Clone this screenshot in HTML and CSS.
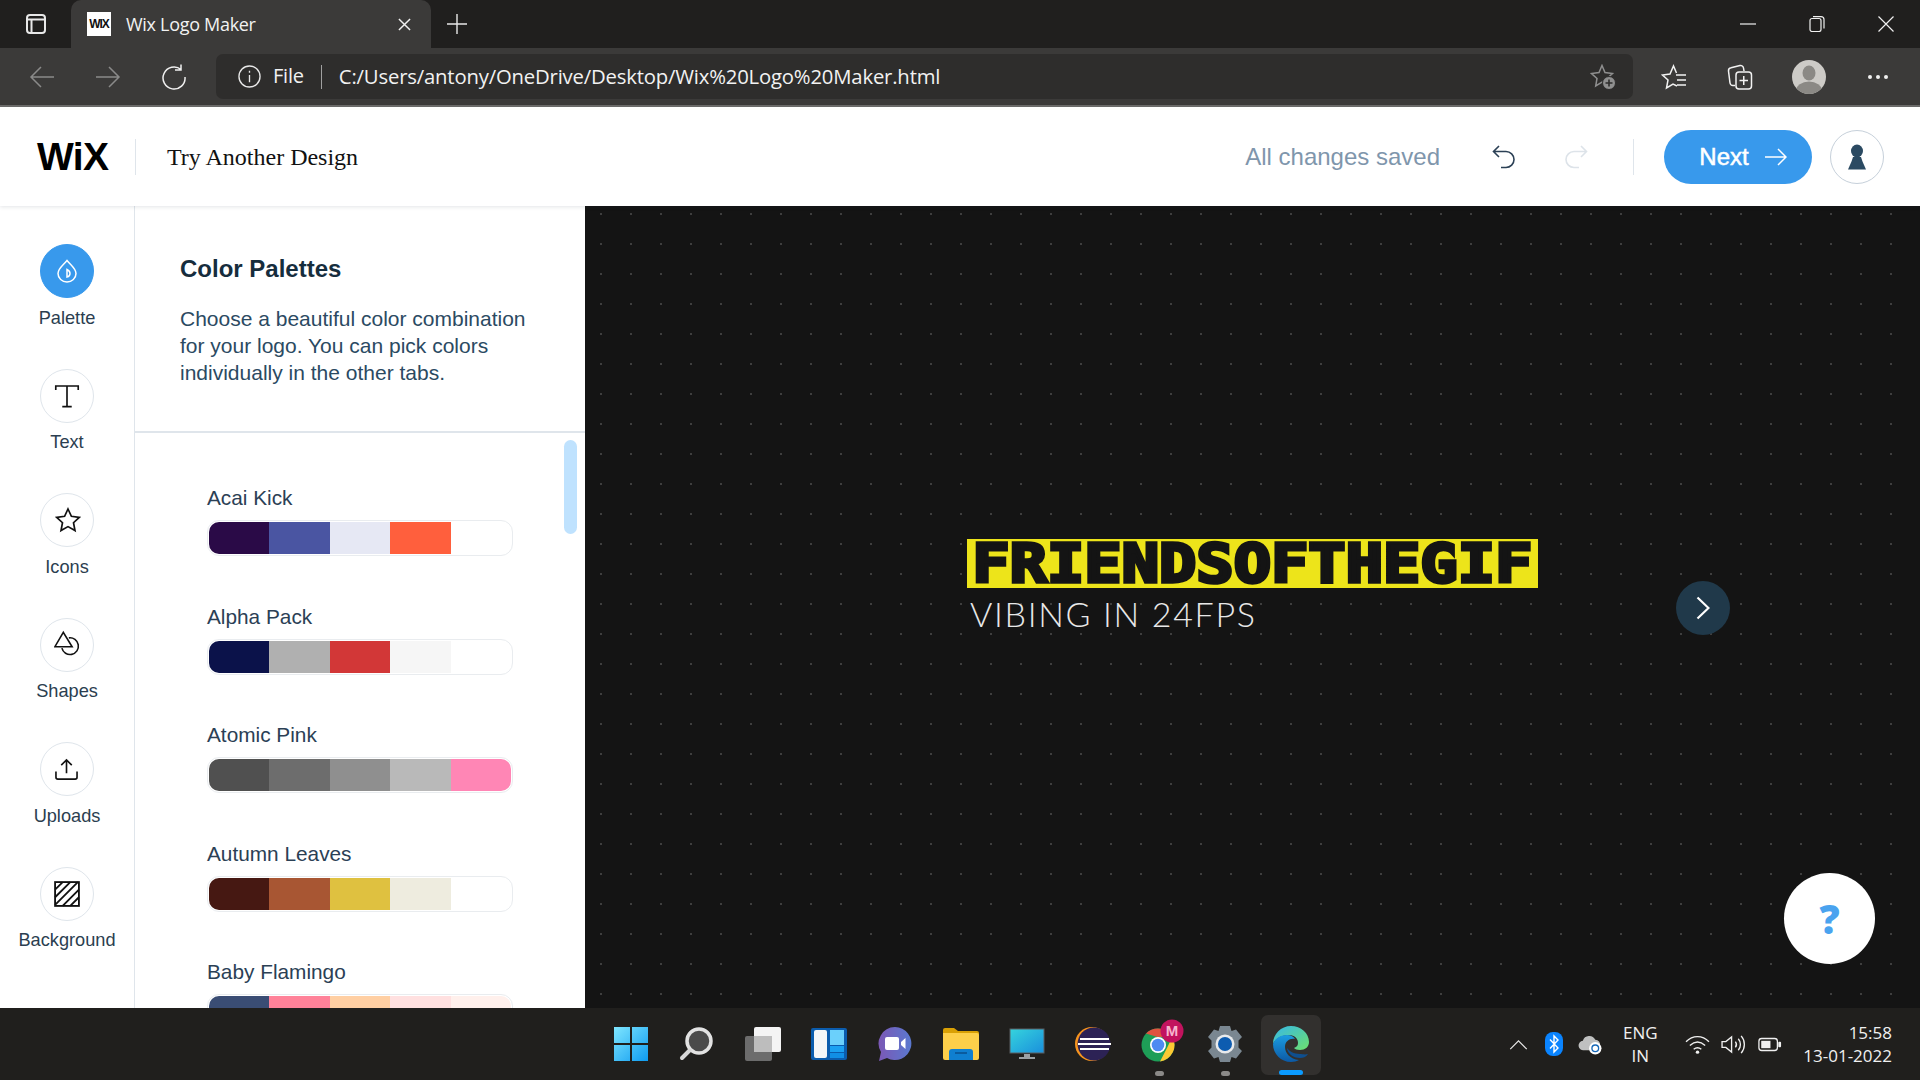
FILE: index.html
```html
<!DOCTYPE html>
<html lang="en">
<head>
<meta charset="utf-8">
<title>Wix Logo Maker</title>
<link rel="stylesheet" href="styles.css">
</head>
<body>
<div class="screen">
  <div class="tabstrip">
    <svg class="tabs-btn" viewBox="0 0 20 20"><rect x="1" y="1" width="18" height="18" rx="3"/><path d="M1 5.500h18M5.500 5.500V19"/></svg>
    <div class="tab">
      <span class="favicon">WIX</span>
      <span class="tab-title">Wix Logo Maker</span>
      <svg class="tab-close" viewBox="0 0 14 14"><path d="M1 1l12 12M13 1L1 13"/></svg>
    </div>
    <svg class="tab-plus" viewBox="0 0 20 20"><path d="M10 0v20M0 10h20"/></svg>
    <div class="win-controls">
      <svg viewBox="0 0 16 16"><path d="M0 8h16"/></svg>
      <svg viewBox="0 0 16 16"><rect x="1" y="2.500" width="11" height="13" rx="2"/><path d="M4 .6h8a3 3 0 0 1 3 3v9"/></svg>
      <svg viewBox="0 0 16 16"><path d="M.5.5l15 15M15.500.5l-15 15"/></svg>
    </div>
  </div>
  <div class="toolbar">
    <svg class="tb-ic dim" viewBox="0 0 26 24"><path d="M25 12H2M12 2L2 12l10 10"/></svg>
    <svg class="tb-ic dim" viewBox="0 0 26 24"><path d="M1 12h23M14 2l10 10-10 10"/></svg>
    <svg class="tb-ic" viewBox="0 0 26 26"><path d="M20 5.500A11 11 0 1 0 24 13M20 0.500v5.500h-6"/></svg>
    <div class="omnibox">
      <svg class="info" viewBox="0 0 24 24"><circle cx="12" cy="12" r="11"/><path d="M12 10.500v7.500M12 6v2"/></svg>
      <span class="file">File</span>
      <span class="omni-sep"></span>
      <span class="url">C:/Users/antony/OneDrive/Desktop/Wix%20Logo%20Maker.html</span>
      <svg class="favadd" viewBox="0 0 26 26"><path class="star-dim" d="M12 1.500l3 7 7.500 1-5.500 5 1.300 7.500-6.300-3.800-6.300 3.800 1.300-7.500-5.500-5 7.500-1z"/><circle class="plus-bg" cx="19" cy="19" r="6.500"/><path class="plus-fg" d="M19 15.500v7M15.500 19h7"/></svg>
    </div>
    <div class="tb-right">
      <svg class="tb-ic2" viewBox="0 0 26 26"><path d="M16 22l-4-2-6.500 4 1.500-8-5.500-5 7.500-1 3.500-8 3 7"/><path d="M15 11h10M16 16h9M16 21h9"/></svg>
      <svg class="tb-ic2" viewBox="0 0 26 26"><path d="M8 21.500H6a3 3 0 0 1-3-2.500L1.500 7A3 3 0 0 1 4 3.800L13 1.500a3 3 0 0 1 3.500 2.500l.5 3"/><rect x="9" y="8" width="15.500" height="17" rx="3"/><path d="M16.750 12v9M12.500 16.500h8.500"/></svg>
      <svg class="avatar" viewBox="0 0 34 34"><defs><clipPath id="avc"><circle cx="17" cy="17" r="17"/></clipPath></defs><g clip-path="url(#avc)"><rect width="34" height="34" fill="#cdcbc7"/><ellipse cx="17" cy="13" rx="6.500" ry="7.500" fill="#8b8985"/><ellipse cx="17" cy="31" rx="13" ry="9.500" fill="#8b8985"/></g></svg>
      <span class="more"><i></i><i></i><i></i></span>
    </div>
  </div>
  <header class="appbar">
    <div class="wix">WiX</div>
    <span class="vsep"></span>
    <span class="try">Try Another Design</span>
    <div class="appbar-right">
      <span class="saved">All changes saved</span>
      <svg class="undo" viewBox="0 0 24 24"><path d="M7 1L1.500 6.500 7 12M1.500 6.500H14a8 8 0 0 1 0 16h-5"/></svg>
      <svg class="redo" viewBox="0 0 24 24"><path d="M17 1l5.500 5.500L17 12M22.500 6.500H10a8 8 0 0 0 0 16h5"/></svg>
      <span class="vsep2"></span>
      <button class="next">Next <svg viewBox="0 0 22 18"><path d="M0 9h21M13 1l8 8-8 8"/></svg></button>
      <span class="user"><svg viewBox="0 0 20 26"><ellipse cx="10" cy="7" rx="6" ry="6.500"/><path d="M6 13h8l1.500 4.500L19 25.500H1l3.500-8z"/></svg></span>
    </div>
  </header>
  <main class="workspace">
    <nav class="sidenav">
      <div class="nav-item">
        <span class="disc active"><svg viewBox="0 0 22 24"><path d="M11 1.500c4 5 9 8 9 13a9 8.500 0 0 1-18 0c0-5 5-8 9-13z"/><path d="M11 10.500c2 1 3 2.500 3 4s-1 3-3 3.500z"/></svg></span>
        <span class="nav-label">Palette</span>
      </div>
      <div class="nav-item">
        <span class="disc"><svg class="ic-text" viewBox="0 0 22 22"><path d="M1.500 6V2.500h19V6M11 2.500V20M7 20h8"/></svg></span>
        <span class="nav-label">Text</span>
      </div>
      <div class="nav-item">
        <span class="disc"><svg class="ic-star" viewBox="0 0 26 26"><path d="M13 2l3.400 7.300 7.900 1-5.800 5.400 1.500 7.800-7-3.900-7 3.900 1.500-7.800-5.800-5.400 7.900-1z"/></svg></span>
        <span class="nav-label">Icons</span>
      </div>
      <div class="nav-item">
        <span class="disc"><svg class="ic-shape" viewBox="0 0 28 26"><path d="M10 1.500L1 17h18.500z"/><path d="M16 7.500a9 9 0 1 1-7.500 11"/></svg></span>
        <span class="nav-label">Shapes</span>
      </div>
      <div class="nav-item">
        <span class="disc"><svg class="ic-up" viewBox="0 0 24 24"><path d="M12 16V2M6.500 7.500L12 2l5.500 5.500M1 14v6a2 2 0 0 0 2 2h18a2 2 0 0 0 2-2v-6"/></svg></span>
        <span class="nav-label">Uploads</span>
      </div>
      <div class="nav-item">
        <span class="disc"><svg viewBox="0 0 24 24"><rect x="1" y="1" width="22" height="22"/><path d="M1 8L8 1M1 15L15 1M1 22L22 1M8 23L23 8M15 23l8-8"/></svg></span>
        <span class="nav-label">Background</span>
      </div>
    </nav>
    <section class="panel">
      <div class="panel-head">
        <h2>Color Palettes</h2>
        <p>Choose a beautiful color combination for your logo. You can pick colors individually in the other tabs.</p>
      </div>
      <div class="palettes">
        <div class="thumb"></div>
        <div class="palette">
          <div class="pal-name">Acai Kick</div>
          <div class="bar"><i class="c-a1"></i><i class="c-a2"></i><i class="c-a3"></i><i class="c-a4"></i><i class="c-w"></i></div>
        </div>
        <div class="palette">
          <div class="pal-name">Alpha Pack</div>
          <div class="bar"><i class="c-b1"></i><i class="c-b2"></i><i class="c-b3"></i><i class="c-b4"></i><i class="c-w"></i></div>
        </div>
        <div class="palette">
          <div class="pal-name">Atomic Pink</div>
          <div class="bar"><i class="c-c1"></i><i class="c-c2"></i><i class="c-c3"></i><i class="c-c4"></i><i class="c-c5"></i></div>
        </div>
        <div class="palette">
          <div class="pal-name">Autumn Leaves</div>
          <div class="bar"><i class="c-d1"></i><i class="c-d2"></i><i class="c-d3"></i><i class="c-d4"></i><i class="c-w"></i></div>
        </div>
        <div class="palette">
          <div class="pal-name">Baby Flamingo</div>
          <div class="bar"><i class="c-e1"></i><i class="c-e2"></i><i class="c-e3"></i><i class="c-e4"></i><i class="c-e5"></i></div>
        </div>
      </div>
    </section>
    <section class="canvas">
      <div class="logo">
        <div class="logo-name"><span>FRIENDSOFTHEGIF</span></div>
        <div class="logo-tag">VIBING IN 24FPS</div>
      </div>
      <span class="chev"><svg viewBox="0 0 14 24"><path d="M1.500 1.500L12.500 12 1.500 22.500"/></svg></span>
      <span class="help">?</span>
    </section>
  </main>
  <footer class="taskbar">
    <div></div>
    <div class="apps">
      <span class="app"><svg viewBox="0 0 36 36"><defs><linearGradient id="w1" x1="0" y1="0" x2="1" y2="1"><stop offset="0" stop-color="#7fe6ff"/><stop offset="1" stop-color="#0e9bf0"/></linearGradient></defs><path fill="url(#w1)" d="M1 1h16v16H1zM19 1h16v16H19zM1 19h16v16H1zM19 19h16v16H19z"/></svg></span>
      <span class="app"><svg viewBox="0 0 36 36"><circle cx="20" cy="15" r="12" fill="#4a4a4a" stroke="#e2e2e2" stroke-width="3.500"/><path d="M10.500 24.500L3 32" stroke="#d8d8d8" stroke-width="4" stroke-linecap="round"/></svg></span>
      <span class="app"><svg viewBox="0 0 36 36"><rect x="0" y="10" width="27" height="25" rx="2" fill="#6c6c6c"/><rect x="9" y="1" width="27" height="25" rx="2" fill="#f4f4f4"/><rect x="9" y="10" width="18" height="16" fill="#bdbdbd"/></svg></span>
      <span class="app"><svg viewBox="0 0 36 36"><rect x="0" y="2" width="36" height="32" rx="2" fill="#0b5cad"/><rect x="3" y="4" width="13" height="28" rx="2" fill="#f4f6f8"/><rect x="19" y="4" width="14" height="15" fill="#6bd0fb"/><rect x="19" y="20" width="14" height="6" fill="#1ba1f2"/><rect x="19" y="27" width="14" height="5" fill="#118fe6"/></svg></span>
      <span class="app"><svg viewBox="0 0 36 36"><defs><linearGradient id="ch" x1="0" y1="0" x2="1" y2="0"><stop offset="0" stop-color="#7b58b5"/><stop offset="1" stop-color="#5a79d0"/></linearGradient></defs><path fill="url(#ch)" d="M18 1a16.500 16.500 0 1 1-8 31l-8 3 2-9A16.500 16.500 0 0 1 18 1z"/><rect x="8" y="11" width="14" height="13" rx="2" fill="#fff"/><path fill="#fff" d="M24 16l4.500-4v11L24 19z"/></svg></span>
      <span class="app"><svg viewBox="0 0 36 36"><path fill="#d9a005" d="M0 4a2 2 0 0 1 2-2h9l4 3h19a2 2 0 0 1 2 2v4H0z"/><path fill="#fdcf4a" d="M0 7h34a2 2 0 0 1 2 2v23a2 2 0 0 1-2 2H2a2 2 0 0 1-2-2z"/><path fill="#0f7fd0" d="M6 34V26a3 3 0 0 1 3-3h18a3 3 0 0 1 3 3v8z"/><rect x="12" y="26" width="12" height="2" fill="#0a5b9e"/></svg></span>
      <span class="app"><svg viewBox="0 0 36 36"><defs><linearGradient id="mon" x1="0" y1="0" x2="1" y2="1"><stop offset="0" stop-color="#35d4dd"/><stop offset="1" stop-color="#1a8fdc"/></linearGradient></defs><rect x="1" y="3" width="34" height="24" fill="url(#mon)" stroke="#5a5f63" stroke-width="1"/><path fill="#9aa0a4" d="M15 28h6v3h5v2H10v-2h5z"/></svg></span>
      <span class="app"><svg viewBox="0 0 36 36"><circle cx="17" cy="18" r="17" fill="#f7941e"/><circle cx="19" cy="18" r="16.500" fill="#2c2255"/><path d="M5 13h29M3 18h33M5 23h29" stroke="#fff" stroke-width="2.200"/></svg></span>
      <span class="app app-ran"><svg class="ic-chrome" viewBox="0 0 44 44"><circle cx="18" cy="26" r="16.500" fill="#1e9e57"/><path fill="#e0533f" d="M18 9.500a16.500 16.500 0 0 1 14.300 8.200L18 18h-.5L6 14.500A16.500 16.500 0 0 1 18 9.500z"/><path fill="#fdc933" d="M32.300 17.700A16.500 16.500 0 0 1 20 42.400L27 29z"/><circle cx="18" cy="26" r="8" fill="#fff"/><circle cx="18" cy="26" r="6.300" fill="#4e8bf2"/><circle cx="32" cy="12" r="11.500" fill="#c2135e"/><text x="32" y="17" class="badge-m">M</text></svg></span>
      <span class="app app-ran"><svg viewBox="0 0 36 36"><path fill="#7a8791" d="M13 0h10l1.500 5 4.500-1.500L35 11l-3.500 3.500v7L35 25l-6 7.500-4.500-1.500L23 36H13l-1.500-5L7 32.500 1 25l3.500-3.500v-7L1 11l6-7.500L11.500 5z"/><circle cx="18" cy="18" r="9.500" fill="#e8eaec"/><circle cx="18" cy="18" r="7" fill="#0d5cb0"/></svg></span>
      <span class="app app-active"><svg viewBox="0 0 36 36"><defs><linearGradient id="e1" x1="0" y1="0" x2="1" y2="1"><stop offset="0" stop-color="#36b8e8"/><stop offset="1" stop-color="#6ee06c"/></linearGradient><linearGradient id="e2" x1="0" y1="0" x2="0" y2="1"><stop offset="0" stop-color="#1b9de2"/><stop offset="1" stop-color="#0c59a4"/></linearGradient></defs><path fill="url(#e1)" d="M18 0c10 0 18 7 18 16 0 5-4 8-9 8-3 0-5-1-6-2 3-1 4-3 4-5 0-4-3-8-9-8C8 9 2 13 0 18 0 8 8 0 18 0z"/><path fill="url(#e2)" d="M0 18C2 12 8 9 14 9c4 0 7 2 8 4-5-1-10 2-10 8 0 6 5 12 14 13-2 1-5 2-8 2C8 36 0 28 0 18z"/><path fill="#0f4f8f" d="M14 22c0 5 6 10 13 10 3 0 6-1 8-4-3 1-6 0-8 0-6 0-11-3-13-6z"/></svg></span>
    </div>
    <div class="tray">
      <svg class="t-chev" viewBox="0 0 20 12"><path d="M1 11l9-9 9 9"/></svg>
      <svg class="t-bt" viewBox="0 0 18 24"><rect width="18" height="24" rx="8" fill="#0a84ff"/><path d="M5 7.500l8 8.500-4 4V4l4 4-8 8.500" fill="none" stroke="#fff" stroke-width="1.400"/></svg>
      <svg class="t-cloud" viewBox="0 0 26 22"><path fill="#bfc0c0" d="M6 17a5 5 0 0 1-1-10 7 7 0 0 1 13-1 5 5 0 0 1 5 6l-6 5z"/><circle cx="18" cy="15" r="6.500" fill="#fff"/><circle cx="18" cy="15" r="3.500" fill="none" stroke="#1668b8" stroke-width="1.400"/></svg>
      <div class="lang"><span>ENG</span><span>IN</span></div>
      <svg class="t-wifi" viewBox="0 0 26 22"><path d="M1 8c7-7 17-7 24 0M5 12c5-4.500 11-4.500 16 0M9 16c2.500-2 5.500-2 8 0"/><circle class="t-fill" cx="13" cy="19" r="1.800"/></svg>
      <svg class="t-vol" viewBox="0 0 26 22"><path d="M1 8v6h4l6 5V3L5 8zM15 8c1.500 2 1.500 4 0 6M18 5c3 3.500 3 8.500 0 12M21 2c4.500 5 4.500 13 0 18"/></svg>
      <svg class="t-bat" viewBox="0 0 26 16"><rect x="1" y="1.500" width="20" height="13" rx="3"/><rect class="t-fill" x="3.500" y="4" width="10" height="8"/><rect class="t-fill" x="22" y="5" width="3" height="6" rx="1"/></svg>
      <div class="clock"><span>15:58</span><span>13-01-2022</span></div>
    </div>
  </footer>
</div>
</body>
</html>
```
FILE: styles.css
```css
* { box-sizing: border-box; }
html, body { margin: 0; padding: 0; }
body { width: 1920px; height: 1080px; overflow: hidden; font-family: "Liberation Sans", Arial, sans-serif; background: #141414; }
svg { display: block; fill: none; }
.screen { width: 1920px; height: 1080px; display: flex; flex-direction: column; }

/* tab strip */
.tabstrip { height: 48px; background: #201f1e; display: flex; align-items: center; flex: none; }
.tabs-btn { width: 20px; height: 20px; margin-left: 26px; stroke: #e8e8e8; stroke-width: 2; }
.tab { width: 360px; height: 48px; margin-left: 25px; background: #3b3a39; border-radius: 10px 10px 0 0; display: flex; align-items: center; padding-left: 16px; }
.favicon { width: 24px; height: 24px; background: #fff; color: #111; font: 700 12px/24px "Liberation Sans", sans-serif; letter-spacing: -1px; text-align: center; flex: none; }
.tab-title { margin-left: 15px; color: #f2f2f2; font: 18px "Open Sans", sans-serif; letter-spacing: -0.300px; flex: 1; }
.tab-close { width: 13px; height: 13px; margin-right: 20px; stroke: #f0f0f0; stroke-width: 1.600; }
.tab-plus { width: 20px; height: 20px; margin-left: 16px; stroke: #e8e8e8; stroke-width: 1.400; }
.win-controls { margin-left: auto; display: flex; align-items: center; gap: 53px; padding-right: 26px; }
.win-controls svg { width: 16px; height: 16px; stroke: #f0f0f0; stroke-width: 1.200; }

/* toolbar */
.toolbar { height: 59px; background: #3b3a39; border-bottom: 2px solid #6d6c6b; display: flex; align-items: center; flex: none; padding-left: 29px; }
.tb-ic { width: 26px; height: 26px; margin-right: 40px; stroke: #f0f0f0; stroke-width: 1.500; flex: none; }
.tb-ic.dim { stroke: #8a8a89; }
.omnibox { width: 1417px; height: 45px; margin-left: -11px; background: #2e2d2c; border-radius: 7px; display: flex; align-items: center; padding-left: 22px; color: #f2f2f2; font: 20px/26px "Open Sans", sans-serif; }
.info { width: 23px; height: 23px; stroke: #e8e8e8; stroke-width: 1.400; }
.file { margin: -2px 0 0 12px; letter-spacing: -0.200px; }
.omni-sep { width: 1px; height: 24px; background: #a0a0a0; margin: 0 17px 0 17px; }
.url { flex: 1; margin-top: -2px; font-size: 20.300px; letter-spacing: -0.180px; white-space: nowrap; }
.favadd { width: 26px; height: 26px; margin-right: 17px; }
.star-dim { stroke: #8f8f8f; stroke-width: 1.500; }
.plus-bg { fill: #8f8f8f; stroke: #2e2d2c; stroke-width: 1; }
.plus-fg { stroke: #2e2d2c; stroke-width: 1.600; }
.tb-right { display: flex; align-items: center; margin-left: 28px; }
.tb-ic2 { width: 26px; height: 26px; margin-right: 40px; stroke: #f2f2f2; stroke-width: 1.500; }
.avatar { width: 34px; height: 34px; margin: 0 42px 0 -1px; }
.more { display: flex; gap: 4px; }
.more i { width: 4px; height: 4px; border-radius: 50%; background: #f0f0f0; }

/* app header */
.appbar { height: 99px; background: #fff; display: flex; align-items: center; flex: none; padding-left: 37px; position: relative; z-index: 2; box-shadow: 0 1px 4px rgba(22,45,61,.12); }
.wix { width: 72px; font: 700 39px/1 "Liberation Sans", sans-serif; color: #000; letter-spacing: -0.700px; white-space: nowrap; }
.vsep { width: 1px; height: 36px; background: #dfe5eb; margin-left: 26px; }
.try { margin: 2px 0 0 31px; font: 24px "Liberation Serif", serif; color: #111; }
.appbar-right { margin-left: auto; display: flex; align-items: center; padding-right: 36px; }
.saved { font-size: 24px; color: #7f96ac; margin-right: 52px; }
.undo, .redo { width: 24px; height: 24px; stroke-width: 1.600; }
.undo { stroke: #2b4055; }
.redo { stroke: #dde3e9; margin-left: 48px; }
.vsep2 { width: 1px; height: 36px; background: #dfe5eb; margin-left: 45px; }
.next { width: 148px; height: 54px; margin-left: 30px; border: 0; border-radius: 27px; background: #3899ec; color: #fff; font: 400 24px "Liberation Sans", sans-serif; -webkit-text-stroke: .5px #fff; display: flex; align-items: center; justify-content: center; gap: 16px; padding: 0 0 0 10px; }
.next svg { width: 22px; height: 18px; stroke: #fff; stroke-width: 1.500; }
.user { width: 54px; height: 54px; margin-left: 18px; border: 1px solid #c6d0da; border-radius: 50%; display: flex; align-items: center; justify-content: center; }
.user svg { width: 20px; height: 26px; fill: #2b4a62; }

/* workspace */
.workspace { flex: 1; display: flex; min-height: 0; }
.sidenav { width: 135px; flex: none; background: #fff; border-right: 1px solid #dfe5eb; padding-top: 38px; display: flex; flex-direction: column; gap: 24px; align-items: center; }
.nav-item { height: 100.500px; width: 100%; display: flex; flex-direction: column; align-items: center; }
.disc { width: 54px; height: 54px; border: 1px solid #dfe5eb; border-radius: 50%; display: flex; align-items: center; justify-content: center; background: #fff; flex: none; }
.disc svg { width: 26px; height: 26px; stroke: #111; stroke-width: 1.700; }
.disc .ic-text { stroke-width: 1.400; }
.disc .ic-star { margin-left: 2px; }
.disc .ic-shape { margin-top: -3px; }
.disc .ic-up { width: 23px; height: 23px; margin-right: 1px; }
.disc.active { background: #3899ec; border-color: #3899ec; }
.disc.active svg { width: 22px; height: 24px; stroke: #fff; stroke-width: 1.500; }
.nav-label { margin-top: 8.500px; font-size: 18.200px; line-height: 22px; color: #2b3e50; white-space: nowrap; }

.panel { width: 450px; flex: none; background: #fff; display: flex; flex-direction: column; min-height: 0; }
.panel-head { height: 227px; border-bottom: 2px solid #dfe5eb; padding: 49px 30px 0 45px; flex: none; }
.panel-head h2 { margin: 0; font: 700 24px/28px "Liberation Sans", sans-serif; color: #162d3d; }
.panel-head p { margin: 22px 0 0; font-size: 21px; line-height: 27px; color: #2b4a62; }
.palettes { flex: 1; min-height: 0; overflow: hidden; position: relative; padding: 53px 0 0 72px; display: flex; flex-direction: column; gap: 48.500px; }
.thumb { position: absolute; left: 429px; top: 7px; width: 13px; height: 94px; border-radius: 7px; background: #bfe2fe; }
.palette { flex: none; }
.pal-name { font-size: 20.800px; line-height: 24px; color: #2b4055; margin-bottom: 10px; }
.bar { width: 306px; height: 36px; border: 1.500px solid #e9ecef; border-radius: 12px; padding: 1px; display: flex; }
.bar i { flex: 1; height: 100%; }
.bar i:first-child { border-radius: 10px 0 0 10px; }
.bar i:last-child { border-radius: 0 10px 10px 0; }
.c-w { background: #fff; }
.c-a1 { background: #2a0a47; } .c-a2 { background: #4a55a2; } .c-a3 { background: #e6e8f4; } .c-a4 { background: #ff5f3d; }
.c-b1 { background: #0b124a; } .c-b2 { background: #b0b0b0; } .c-b3 { background: #d23737; } .c-b4 { background: #f6f6f6; }
.c-c1 { background: #505050; } .c-c2 { background: #6d6d6d; } .c-c3 { background: #8f8f8f; } .c-c4 { background: #b9b9b9; } .c-c5 { background: #ff86b5; }
.c-d1 { background: #461812; } .c-d2 { background: #a85633; } .c-d3 { background: #dfc140; } .c-d4 { background: #eeecdf; }
.c-e1 { background: #3a4d74; } .c-e2 { background: #ff8299; } .c-e3 { background: #ffcfa3; } .c-e4 { background: #ffe0e0; } .c-e5 { background: #fff0ec; }

/* canvas */
.canvas { flex: 1; position: relative; background-color: #141414; background-image: radial-gradient(circle at center, #3e3e3e 0, #3e3e3e 1px, transparent 1.400px); background-size: 30px 30px; background-position: 1px 23px; }
.logo { position: absolute; left: 382px; top: 333px; }
.logo-name { width: 571px; height: 49px; background: #ede41a; display: flex; align-items: center; justify-content: center; }
.logo-name span { display: block; font: 700 53px/49px "DejaVu Sans Mono", monospace; color: #141414; -webkit-text-stroke: 3.500px #141414; transform: scaleX(1.170); white-space: nowrap; }
.logo-tag { margin: 5px 0 0 3px; font: 300 34px/42px Lato, sans-serif; letter-spacing: 1.670px; color: #e8e8e8; white-space: nowrap; }
.chev { position: absolute; left: 1091px; top: 375px; width: 54px; height: 54px; border-radius: 50%; background: #20394a; display: flex; align-items: center; justify-content: center; }
.chev svg { width: 14px; height: 24px; stroke: #fff; stroke-width: 2.200; }
.help { position: absolute; left: 1199px; top: 667px; width: 91px; height: 91px; border-radius: 50%; background: #fff; color: #4aa3ef; font: 900 40px/91px "Open Sans", sans-serif; text-align: center; }

/* taskbar */
.taskbar { height: 72px; flex: none; background: #201f1d; display: grid; grid-template-columns: 1fr auto 1fr; align-items: center; }
.apps { display: flex; align-items: center; margin-left: 2px; }
.app { width: 66px; height: 72px; display: flex; align-items: center; justify-content: center; position: relative; }
.app svg { width: 36px; height: 36px; }
.app .ic-chrome { width: 44px; height: 44px; margin-top: -6px; margin-left: 6px; }
.badge-m { font: 700 15px "Liberation Sans", sans-serif; fill: #f7b6cf; text-anchor: middle; }
.app-ran::after { content: ""; position: absolute; left: 29px; bottom: 4px; width: 9px; height: 5px; border-radius: 3px; background: #8b8a88; }
.app-active::before { content: ""; position: absolute; left: 3px; top: 7px; width: 60px; height: 60px; border-radius: 7px; background: #32302e; }
.app-active svg { position: relative; }
.app-active::after { content: ""; position: absolute; left: 21px; bottom: 5px; width: 24px; height: 5px; border-radius: 3px; background: #0a9bff; }
.tray { justify-self: end; display: flex; align-items: center; color: #f0f0f0; font: 17px "Open Sans", sans-serif; padding-right: 28px; }
.tray svg { flex: none; }
.t-chev { width: 19px; height: 11px; stroke: #e8e8e8; stroke-width: 1.300; }
.t-bt { width: 18px; height: 24px; margin-left: 17.500px; }
.t-cloud { width: 25px; height: 21px; margin-left: 14.500px; }
.lang { width: 50px; margin-left: 12.500px; display: flex; flex-direction: column; align-items: center; line-height: 23px; }
.t-wifi { width: 25px; height: 21px; margin-left: 20px; stroke: #f0f0f0; stroke-width: 1.500; }
.t-vol { width: 25px; height: 21px; margin-left: 11px; stroke: #f0f0f0; stroke-width: 1.400; }
.t-bat { width: 24px; height: 15px; margin-left: 12px; stroke: #f0f0f0; stroke-width: 1.400; }
.t-fill { fill: #f0f0f0; stroke: none; }
.clock { margin-left: 21px; display: flex; flex-direction: column; align-items: flex-end; line-height: 23px; }
```
